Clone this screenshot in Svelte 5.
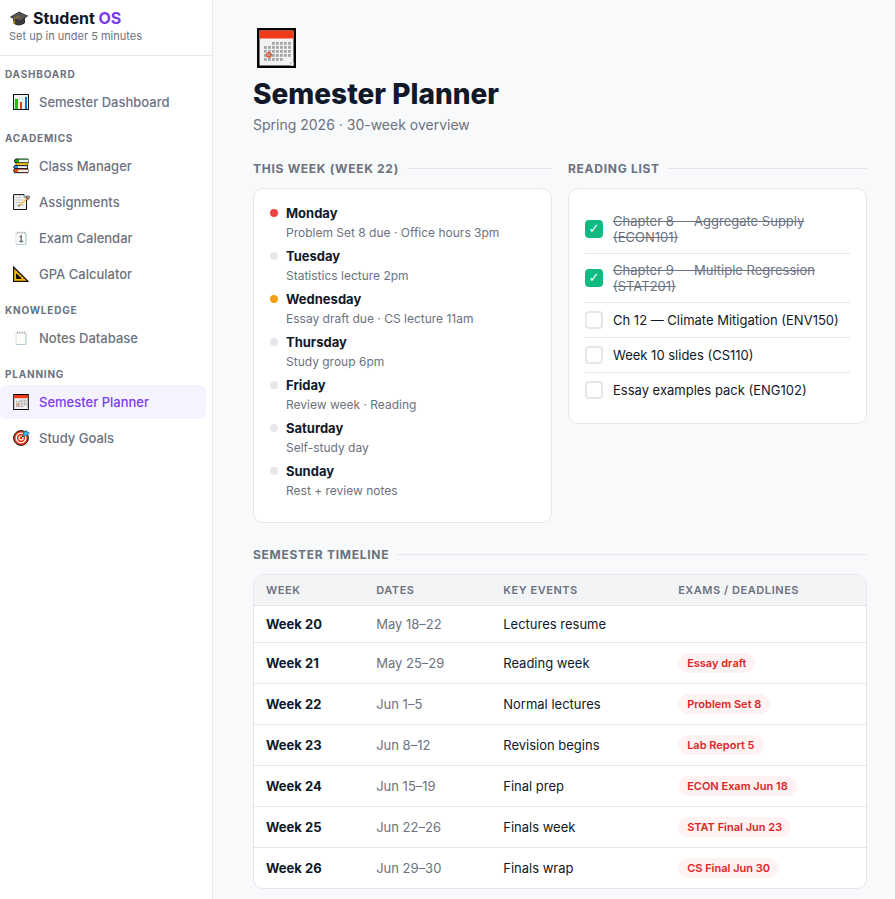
<script lang="ts">
  interface NavItem {
    icon: string;
    label: string;
    active?: boolean;
  }

  const sections: { title: string; items: NavItem[] }[] = [
    { title: "Dashboard", items: [{ icon: "chart", label: "Semester Dashboard" }] },
    {
      title: "Academics",
      items: [
        { icon: "books", label: "Class Manager" },
        { icon: "memo", label: "Assignments" },
        { icon: "date", label: "Exam Calendar" },
        { icon: "ruler", label: "GPA Calculator" },
      ],
    },
    { title: "Knowledge", items: [{ icon: "notes", label: "Notes Database" }] },
    {
      title: "Planning",
      items: [
        { icon: "calendar", label: "Semester Planner", active: true },
        { icon: "target", label: "Study Goals" },
      ],
    },
  ];

  const days = [
    { name: "Monday", note: "Problem Set 8 due · Office hours 3pm", level: "urgent" },
    { name: "Tuesday", note: "Statistics lecture 2pm", level: "" },
    { name: "Wednesday", note: "Essay draft due · CS lecture 11am", level: "soon" },
    { name: "Thursday", note: "Study group 6pm", level: "" },
    { name: "Friday", note: "Review week · Reading", level: "" },
    { name: "Saturday", note: "Self-study day", level: "" },
    { name: "Sunday", note: "Rest + review notes", level: "" },
  ];

  let readings = $state([
    { text: "Chapter 8 — Aggregate Supply (ECON101)", done: true },
    { text: "Chapter 9 — Multiple Regression (STAT201)", done: true },
    { text: "Ch 12 — Climate Mitigation (ENV150)", done: false },
    { text: "Week 10 slides (CS110)", done: false },
    { text: "Essay examples pack (ENG102)", done: false },
  ]);

  const weeks = [
    { week: "Week 20", dates: "May 18–22", events: "Lectures resume", due: "" },
    { week: "Week 21", dates: "May 25–29", events: "Reading week", due: "Essay draft" },
    { week: "Week 22", dates: "Jun 1–5", events: "Normal lectures", due: "Problem Set 8" },
    { week: "Week 23", dates: "Jun 8–12", events: "Revision begins", due: "Lab Report 5" },
    { week: "Week 24", dates: "Jun 15–19", events: "Final prep", due: "ECON Exam Jun 18" },
    { week: "Week 25", dates: "Jun 22–26", events: "Finals week", due: "STAT Final Jun 23" },
    { week: "Week 26", dates: "Jun 29–30", events: "Finals wrap", due: "CS Final Jun 30" },
  ];

  // calendar dots: [y, first column, last column]
  const dotRows = [
    [14, 2, 6],
    [18, 0, 6],
    [22, 0, 6],
    [26, 0, 6],
    [30, 0, 4],
  ];
  const dots = dotRows.flatMap(([y, from, to]) =>
    Array.from({ length: to - from + 1 }, (_, i) => ({ x: 7 + (from + i) * 4, y }))
  );
</script>

{#snippet calendar()}
  <svg viewBox="0 0 39 40" aria-hidden="true">
    <rect width="39" height="40" fill="#000" />
    <rect x="2.5" y="2.5" width="34" height="35" fill="#f2f2f2" />
    <rect x="2.5" y="2.5" width="34" height="8" fill="#f03a17" />
    {#each dots as dot}
      <rect x={dot.x} y={dot.y} width="2.8" height="2.8" fill="#a6a6a6" />
    {/each}
    <circle cx="12" cy="27" r="2.2" fill="none" stroke="#f03a17" stroke-width="1.2" />
    <path d="M33 37.500 36.500 34v3.500z" fill="#fff" />
    <path d="M33 37.500v-3.500h3.500z" fill="#d2d2d2" />
  </svg>
{/snippet}

{#snippet icon(name: string)}
  {#if name === "calendar"}
    {@render calendar()}
  {:else if name === "chart"}
    <svg viewBox="0 0 16 16" aria-hidden="true">
      <rect x=".5" y=".5" width="15" height="15" fill="#f2f2f2" stroke="#111" />
      <path d="M1 4.500h14M1 8.500h14M1 12h14" stroke="#ddd" stroke-width=".6" />
      <rect x="2" y="5" width="3" height="10" fill="#16c60c" />
      <rect x="7" y="8" width="2" height="7" fill="#f03a17" />
      <rect x="12" y="3" width="2" height="12" fill="#0078d7" />
    </svg>
  {:else if name === "books"}
    <svg viewBox="0 0 16 16" aria-hidden="true">
      <path d="M2.500 1h12.500v4H2.500L1.500 3z" fill="#16a60c" stroke="#111" stroke-width=".9" />
      <path d="M6 1.700h9v2.600H6z" fill="#eee" />
      <path d="M3 4.800h12v2.700H3z" fill="#fcc419" stroke="#222" stroke-width=".6" />
      <path d="M1.500 7.500h13v3H1.500L.6 9z" fill="#2f8fdc" stroke="#111" stroke-width=".8" />
      <path d="M5 8.200h9v1.800H5z" fill="#eee" />
      <path d="M1.500 10.700H15v4H1.500L.6 12.500z" fill="#e8501c" stroke="#111" stroke-width=".9" />
      <path d="M5.500 11.800H15v2.200H5.500L4.800 13z" fill="#eee" />
    </svg>
  {:else if name === "memo"}
    <svg class="wide" viewBox="0 0 17 16" aria-hidden="true">
      <path d="M.6.6h10.400l2.500 2.700v12.200H.6z" fill="#f5f5f5" stroke="#111" />
      <path d="M11 .6v2.700h2.500" fill="#ddd" stroke="#333" stroke-width=".5" />
      <path d="M2.500 3.500h6M2.500 6h7.500M2.500 8.500h6M2.500 11h9" stroke="#b5b5b5" stroke-width=".8" />
      <path d="m6.500 11.500 8-7.500" stroke="#f5bd3c" stroke-width="1.500" />
      <path d="m13.500 5 1.800-1.700" stroke="#b5655a" stroke-width="2" />
      <path d="m12.800 3.300 2-1.500 1.700.8-.4 1.900-1.900 1.600" fill="none" stroke="#222" stroke-width=".8" />
      <path d="m5 12.800 1.100-1.900 1.100 1.100z" fill="#222" />
    </svg>
  {:else if name === "date" || name === "notes"}
    <svg viewBox="0 0 16 16" aria-hidden="true">
      <rect x="3" y="3" width="10" height="11.500" rx=".5" fill="#fdfdfb" stroke="#d8d8d0" stroke-width=".9" />
      <path d="M12.800 3v11.500H3" fill="none" stroke="#b6cbd2" stroke-width="1" />
      <path d="M4 2.500h8" stroke="#96969a" stroke-width="1.400" stroke-dasharray="1 1.300" />
      {#if name === "date"}
        <path d="M6.500 7 8.200 6v5.500M6.300 11.500h4" fill="none" stroke="#666e80" stroke-width="1.400" />
      {/if}
    </svg>
  {:else if name === "ruler"}
    <svg viewBox="0 0 16 16" aria-hidden="true">
      <path d="M.6 1v14.400H15z" fill="#ffb900" stroke="#111" stroke-width="1.200" />
      <path d="M3.500 8v4.500h4.700z" fill="#111" stroke="#111" stroke-width="1" />
      <path d="m2.500 5 1-1m1 3 1-1m1 3 1-1m1 3 1-1m1 3 1-1" stroke="#111" stroke-width=".6" />
    </svg>
  {:else if name === "target"}
    <svg class="wide" viewBox="0 0 17 16" aria-hidden="true">
      <circle cx="8" cy="8" r="7.400" fill="#f03a17" stroke="#111" />
      <circle cx="8" cy="8" r="4.800" fill="none" stroke="#fff" stroke-width="1.300" />
      <circle cx="8" cy="8" r="2" fill="#f03a17" stroke="#fff" stroke-width="1.200" />
      <path d="m8.200 7.800 4-4" stroke="#111" stroke-width="1" />
      <path d="m10 6.200.4-3.200L13.500.300l.8 1.700 2.200.8-2.800 3z" fill="#31b8ea" stroke="#155" stroke-width=".6" />
    </svg>
  {/if}
{/snippet}

<div class="app">
  <aside class="sidebar">
    <header class="brand">
      <div class="brand-name">
        <svg viewBox="0 0 20 18" aria-hidden="true">
          <path d="M4.500 8v6q5 4 11 0V8z" fill="#3b3b3b" stroke="#111" stroke-width=".8" />
          <path d="M10 3 18.500 7 11 12.500 1.500 8z" fill="#555" stroke="#222" stroke-width=".8" />
          <path d="M10.500 7.500 5 9.500v4" fill="none" stroke="#b98a2c" stroke-width=".9" />
          <path d="M4.300 12h1.400v3H4.300z" fill="#d99a1c" />
        </svg>
        <span>Student <span class="accent">OS</span></span>
      </div>
      <p>Set up in under 5 minutes</p>
    </header>
    <nav>
      {#each sections as section}
        <h2 class="nav-title">{section.title}</h2>
        <div class="nav-list">
          {#each section.items as item}
            <a
              href="#top"
              class="nav-item"
              class:active={item.active}
              aria-current={item.active ? "page" : undefined}
            >
              <span class="nav-icon">{@render icon(item.icon)}</span>
              {item.label}
            </a>
          {/each}
        </div>
      {/each}
    </nav>
  </aside>

  <main>
    <div class="page-icon">{@render calendar()}</div>
    <h1>Semester Planner</h1>
    <p class="subtitle">Spring 2026 · 30-week overview</p>

    <div class="columns">
      <section>
        <h2 class="section-title">This week (Week 22)</h2>
        <ul class="card">
          {#each days as day}
            <li class="day">
              <span class="dot {day.level}"></span>
              <div>
                <div class="day-name">{day.name}</div>
                <div class="day-note">{day.note}</div>
              </div>
            </li>
          {/each}
        </ul>
      </section>

      <section>
        <h2 class="section-title">Reading list</h2>
        <ul class="card">
          {#each readings as reading}
            <li class="reading">
              <label>
                <input type="checkbox" bind:checked={reading.done} />
                <span class:done={reading.done}>{reading.text}</span>
              </label>
            </li>
          {/each}
        </ul>
      </section>
    </div>

    <section>
      <h2 class="section-title">Semester timeline</h2>
      <div class="table-wrap">
        <table>
          <thead>
            <tr>
              <th>Week</th>
              <th>Dates</th>
              <th>Key events</th>
              <th>Exams / Deadlines</th>
            </tr>
          </thead>
          <tbody>
            {#each weeks as row}
              <tr>
                <td class="week">{row.week}</td>
                <td class="dates">{row.dates}</td>
                <td>{row.events}</td>
                <td>
                  {#if row.due}
                    <span class="tag">{row.due}</span>
                  {/if}
                </td>
              </tr>
            {/each}
          </tbody>
        </table>
      </div>
    </section>
  </main>
</div>

<style>
  :global(body) {
    margin: 0;
    background: #f8f9fb;
  }

  .app {
    display: flex;
    min-height: 100vh;
    color: #111827;
    font-family: Inter, "Liberation Sans", sans-serif;
    font-size: 13px;
    line-height: 16px;
  }

  .app :global(*) {
    box-sizing: border-box;
  }

  h1,
  h2,
  p,
  ul {
    margin: 0;
    padding: 0;
  }

  ul {
    list-style: none;
  }

  svg {
    display: block;
    width: 100%;
    height: 100%;
  }

  .sidebar {
    flex: 0 0 213px;
    background: #fff;
    border-right: 1px solid #e5e7eb;
  }

  .brand {
    padding: 8px 9px 11px;
    border-bottom: 1px solid #e5e7eb;
  }

  .brand-name {
    display: flex;
    align-items: center;
    gap: 4px;
    font-size: 16px;
    font-weight: 700;
    line-height: 20px;
  }

  .brand-name svg {
    width: 20px;
    height: 18px;
  }

  .accent {
    color: #7c3aed;
  }

  .brand p {
    color: #6b7280;
    font-size: 11px;
  }

  .nav-title {
    padding: 12px 5px 4px;
    color: #6b7280;
    font-size: 10px;
    font-weight: 700;
    letter-spacing: 0.08em;
    line-height: 12px;
    text-transform: uppercase;
  }

  .nav-list {
    display: flex;
    flex-direction: column;
    gap: 2px;
    padding: 1px 6px 1px 0;
  }

  .nav-item {
    display: flex;
    align-items: center;
    gap: 10px;
    height: 34px;
    padding: 0 13px;
    border-radius: 6px;
    color: #6b7280;
    font-weight: 500;
    text-decoration: none;
  }

  .nav-item.active {
    background: #f5f3ff;
    color: #7c3aed;
  }

  .nav-icon {
    width: 16px;
    height: 16px;
  }

  .wide {
    width: 17px;
  }

  main {
    flex: 1;
    min-width: 0;
    padding: 28px 28px 10px 40px;
  }

  .page-icon {
    width: 39px;
    height: 40px;
    margin: 0 4px 8px;
  }

  h1 {
    font-size: 28px;
    font-weight: 800;
    line-height: 36px;
  }

  .subtitle {
    margin: 4px 0 28px;
    color: #6b7280;
    font-size: 14px;
    line-height: 17px;
  }

  .columns {
    display: grid;
    grid-template-columns: 1fr 1fr;
    align-items: start;
    gap: 16px;
    margin-bottom: 24px;
  }

  .section-title {
    display: flex;
    align-items: center;
    gap: 8px;
    margin-bottom: 12px;
    color: #6b7280;
    font-size: 12px;
    font-weight: 700;
    letter-spacing: 0.06em;
    line-height: 15px;
    text-transform: uppercase;
  }

  .section-title::after {
    content: "";
    flex: 1;
    height: 1px;
    background: #e5e7eb;
  }

  .card {
    padding: 16px;
    background: #fff;
    border: 1px solid #e5e7eb;
    border-radius: 10px;
  }

  .day {
    display: flex;
    gap: 8px;
    padding-bottom: 8px;
  }

  .dot {
    flex: none;
    width: 8px;
    height: 8px;
    margin-top: 4px;
    border-radius: 50%;
    background: #e5e7eb;
  }

  .dot.urgent {
    background: #ef4444;
  }

  .dot.soon {
    background: #f59e0b;
  }

  .day-name {
    font-weight: 700;
  }

  .day-note {
    margin-top: 4px;
    color: #6b7280;
    font-size: 12px;
    line-height: 15px;
  }

  .reading {
    border-bottom: 1px solid #e5e7eb;
  }

  .reading:last-child {
    border-bottom: none;
  }

  .reading label {
    display: flex;
    align-items: center;
    gap: 10px;
    padding: 8px 0;
    cursor: pointer;
  }

  .reading .done {
    color: #6b7280;
    text-decoration: line-through;
  }

  .reading input {
    appearance: none;
    display: flex;
    align-items: center;
    justify-content: center;
    flex: none;
    width: 18px;
    height: 18px;
    margin: 0;
    background: #fff;
    border: 2px solid #e5e7eb;
    border-radius: 4px;
  }

  .reading input:checked {
    background: #10b981;
    border-color: #10b981;
  }

  .reading input:checked::after {
    content: "✓";
    color: #fff;
    font-family: "DejaVu Sans", sans-serif;
    font-size: 13px;
    line-height: 14px;
  }

  .table-wrap {
    overflow: hidden;
    background: #fff;
    border: 1px solid #e5e7eb;
    border-radius: 10px;
  }

  table {
    width: 100%;
    border-collapse: separate;
    border-spacing: 0;
  }

  th {
    padding: 8px 12px;
    background: #f3f4f6;
    border-bottom: 1px solid #e5e7eb;
    color: #6b7280;
    font-size: 11px;
    font-weight: 600;
    letter-spacing: 0.05em;
    line-height: 14px;
    text-align: left;
    text-transform: uppercase;
  }

  td {
    padding: 10px 12px;
    border-bottom: 1px solid #e5e7eb;
  }

  tr:last-child td {
    border-bottom: none;
  }

  .week {
    font-weight: 700;
  }

  .dates {
    color: #6b7280;
  }

  .tag {
    display: block;
    width: fit-content;
    padding: 3px 9px;
    background: #fef2f2;
    border-radius: 10px;
    color: #dc2626;
    font-size: 11px;
    font-weight: 600;
    line-height: 14px;
  }
</style>
